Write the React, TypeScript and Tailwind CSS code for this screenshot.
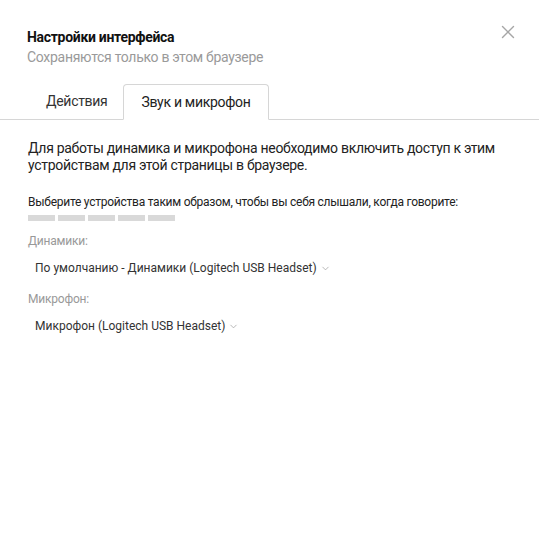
import { X, ChevronDown } from 'lucide-react'

const font = { fontFamily: 'Roboto, "Noto Sans", sans-serif' }

function DeviceSelect({ label, value }: { label: string; value: string }) {
  return (
    <div className="flex flex-col">
      <span className="text-[12px] leading-[16px] tracking-[-0.2px] text-[#999]">{label}</span>
      <button className="mt-[10px] flex items-center gap-[3px] self-start px-[7px] text-[12px] leading-[18px] text-[#333]">
        {value}
        <ChevronDown size={11} strokeWidth={1.5} className="text-[#999]" />
      </button>
    </div>
  )
}

export default function App() {
  const bars = [0, 1, 2, 3, 4]
  return (
    <div className="relative h-[540px] w-[539px] bg-white" style={font}>
      <button className="absolute left-[497px] top-[21px] text-[#a6a6a6]">
        <X size={22} strokeWidth={1.5} />
      </button>

      {/* заголовок */}
      <div className="px-[27px] pt-[28px] tracking-[-0.3px]">
        <h1 className="text-[14px] font-bold leading-[18px] text-[#111]">Настройки интерфейса</h1>
        <p className="mt-[2px] text-[14px] leading-[18px] text-[#9a9a9a]">Сохраняются только в этом браузере</p>
      </div>

      {/* вкладки */}
      <div className="mt-[18px] flex border-b border-[#d6d6d6] pl-[27px] tracking-[-0.3px]">
        <button className="h-[35px] w-[96px] pl-[19px] text-left text-[14px] text-[#333]">Действия</button>
        <button className="-mb-px h-[36px] w-[146px] rounded-t-[4px] border border-b-white border-[#d6d6d6] bg-white text-[14px] text-[#222]">
          Звук и микрофон
        </button>
      </div>

      {/* содержимое */}
      <div className="px-[28px] pt-[20px]">
        <p className="text-[14px] leading-[17px] tracking-[-0.3px] text-[#222]">
          Для работы динамика и микрофона необходимо включить доступ к этим устройствам для этой страницы в браузере.
        </p>
        <p className="mt-[20px] text-[12px] leading-[16px] tracking-[-0.25px] text-[#222]">
          Выберите устройства таким образом, чтобы вы себя слышали, когда говорите:
        </p>
        <div className="mt-[5px] flex gap-[3px]">
          {bars.map(i => (
            <div key={i} className="h-[6px] w-[27px] bg-[#d9d9d9]" />
          ))}
        </div>
        <div className="mt-[12px] flex flex-col gap-[14px]">
          <DeviceSelect label="Динамики:" value="По умолчанию - Динамики (Logitech USB Headset)" />
          <DeviceSelect label="Микрофон:" value="Микрофон (Logitech USB Headset)" />
        </div>
      </div>
    </div>
  )
}
